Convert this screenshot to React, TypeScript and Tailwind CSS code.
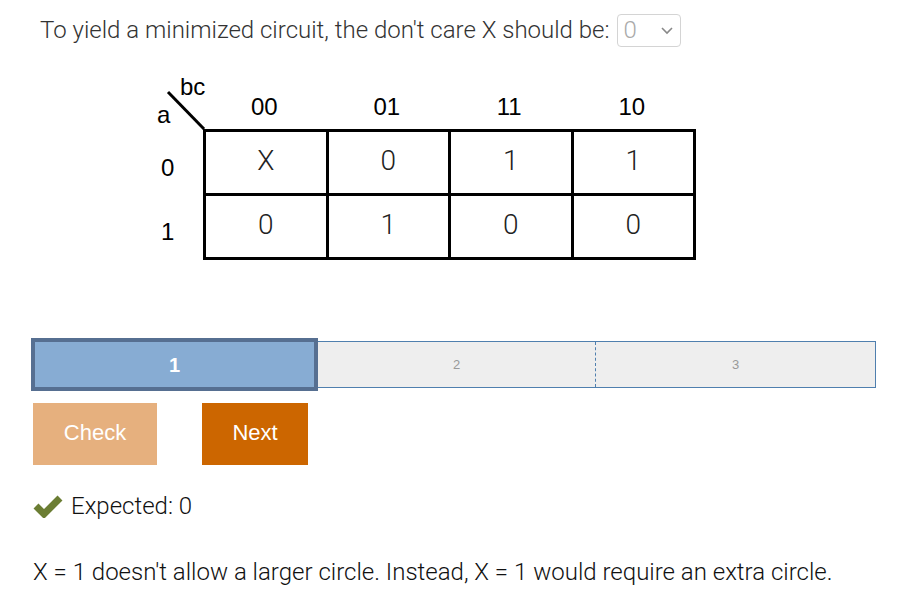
import * as React from "react"

const cols = ["00", "01", "11", "10"]
const rows = [
  { label: "0", cells: ["X", "0", "1", "1"] },
  { label: "1", cells: ["0", "1", "0", "0"] },
]

function KMap() {
  return (
    <div className="ml-[150px] mt-[23px] flex">
      {/* row labels + corner */}
      <div className="w-[53px] flex flex-col">
        <div className="relative h-[58px]">
          <svg className="absolute left-0 top-0" width="56" height="60" viewBox="0 0 56 60">
            <line x1="18" y1="21" x2="54" y2="58" stroke="#000" strokeWidth="3" />
          </svg>
          <span className="absolute left-[30px] top-[4px] text-[24px] leading-none font-['Liberation_Sans',sans-serif] text-black">
            bc
          </span>
          <span className="absolute left-[7px] top-[32px] text-[24px] leading-none font-['Liberation_Sans',sans-serif] text-black">
            a
          </span>
        </div>
        {rows.map((r) => (
          <div
            key={r.label}
            className="h-[64px] flex items-center pl-[11px] pt-[14px] text-[24px] font-['Liberation_Sans',sans-serif] font-normal text-black"
          >
            {r.label}
          </div>
        ))}
      </div>
      <div className="flex flex-col">
        <div className="h-[58px] flex">
          {cols.map((c) => (
            <div
              key={c}
              className="w-[122.5px] flex items-center justify-center pt-[14px] text-[24px] font-['Liberation_Sans',sans-serif] font-normal text-black"
            >
              {c}
            </div>
          ))}
        </div>
        <div className="border-l-[3px] border-t-[3px] border-black">
          {rows.map((r) => (
            <div key={r.label} className="flex">
              {r.cells.map((v, i) => (
                <div
                  key={i}
                  className="w-[122.5px] h-[64px] border-r-[3px] border-b-[3px] border-black flex items-center justify-center pb-[4px] text-[28px] font-light font-['Roboto',sans-serif] text-[#222]"
                >
                  {v}
                </div>
              ))}
            </div>
          ))}
        </div>
      </div>
    </div>
  )
}

function Progress() {
  return (
    <div className="ml-[31px] mt-[78px] w-[845px] flex items-center font-['Liberation_Sans',sans-serif]">
      <div className="w-[287px] h-[53px] border-[4px] border-[#566f91] bg-[#87acd3] flex items-center justify-center text-white font-bold text-[20px]">
        1
      </div>
      <div className="flex-1 h-[47px] flex border border-l-0 border-[#4f7fae] bg-[#eeeeee]">
        <div className="w-[278px] flex items-center justify-center border-r border-dashed border-[#4f7fae] text-[13px] text-[#999]">
          2
        </div>
        <div className="flex-1 flex items-center justify-center text-[13px] text-[#999]">3</div>
      </div>
    </div>
  )
}

function Check() {
  return (
    <svg width="30" height="24" viewBox="0 0 30 24">
      <path d="M3 12 L11 20 L27 4" fill="none" stroke="#6b7d33" strokeWidth="7" strokeLinejoin="miter" />
    </svg>
  )
}

export default function App() {
  return (
    <div className="w-[907px] h-[605px] bg-white font-['Roboto',sans-serif] font-light">
      <div className="pt-[12px] pl-[40px] flex items-center">
        <span className="text-[24px] text-[#333]">To yield a minimized circuit, the don't care X should be:</span>
        <div className="ml-[7px] w-[64px] h-[33px] border border-[#d4d4d4] rounded-[4px] flex items-center justify-between pl-[6px] pr-[6px]">
          <span className="text-[24px] text-[#aaa]">0</span>
          <svg width="14" height="10" viewBox="0 0 14 10">
            <path d="M2 3 L7 8 L12 3" fill="none" stroke="#888" strokeWidth="1.6" />
          </svg>
        </div>
      </div>
      <KMap />
      <Progress />
      <div className="ml-[33px] mt-[12px] flex gap-[45px] font-['Liberation_Sans',sans-serif] font-normal">
        <button className="w-[124px] h-[62px] bg-[#e6b07e] text-white text-[22px] pb-[3px]">Check</button>
        <button className="w-[106px] h-[62px] bg-[#cc6600] text-white text-[22px] pb-[3px]">Next</button>
      </div>
      <div className="ml-[33px] mt-[23px] flex items-center gap-[8px]">
        <Check />
        <span className="text-[24px] text-[#111]">Expected: 0</span>
      </div>
      <div className="ml-[33px] mt-[30px] text-[24px] text-[#111]">
        X = 1 doesn't allow a larger circle. Instead, X = 1 would require an extra circle.
      </div>
    </div>
  )
}
